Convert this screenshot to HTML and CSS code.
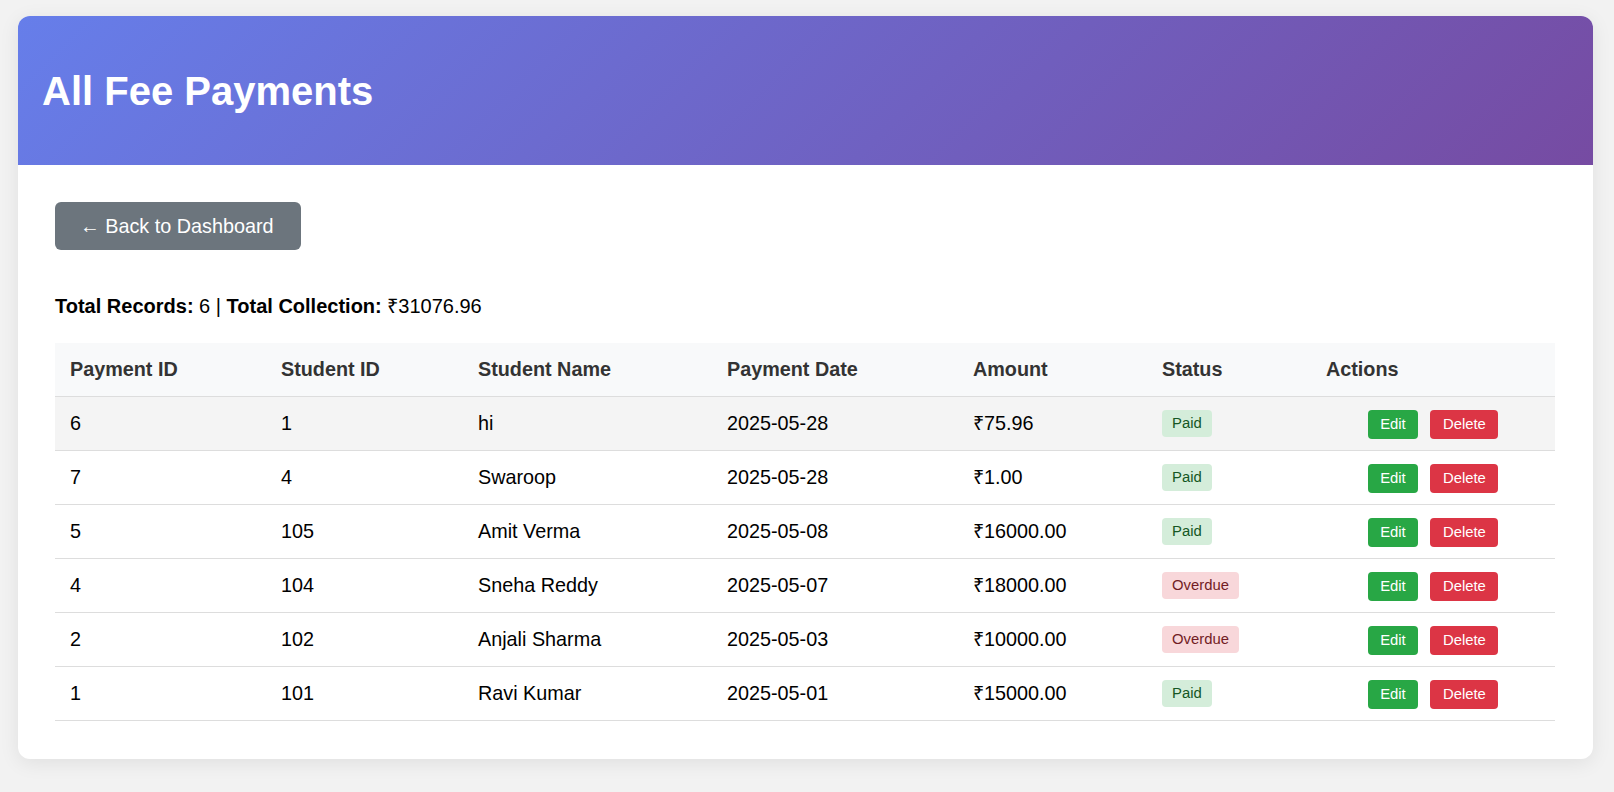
FILE: index.html
```html
<!DOCTYPE html>
<html lang="en">
<head>
<meta charset="utf-8">
<title>All Fee Payments</title>
<link rel="stylesheet" href="styles.css">
</head>
<body>
<div class="card">
  <header class="card-header">
    <h1>All Fee Payments</h1>
  </header>
  <main class="card-body">
    <div class="toolbar">
      <a class="btn-back" href="#">← Back to Dashboard</a>
    </div>
    <p class="summary"><strong>Total Records:</strong> 6 | <strong>Total Collection:</strong> ₹31076.96</p>
    <table class="payments">
      <colgroup>
        <col class="c1"><col class="c2"><col class="c3"><col class="c4"><col class="c5"><col class="c6"><col class="c7">
      </colgroup>
      <thead>
        <tr>
          <th>Payment ID</th><th>Student ID</th><th>Student Name</th><th>Payment Date</th><th>Amount</th><th>Status</th><th>Actions</th>
        </tr>
      </thead>
      <tbody>
        <tr class="hover">
          <td>6</td><td>1</td><td>hi</td><td>2025-05-28</td><td>₹75.96</td>
          <td><span class="badge paid">Paid</span></td>
          <td class="actions"><div class="act"><a class="btn edit" href="#">Edit</a><a class="btn delete" href="#">Delete</a></div></td>
        </tr>
        <tr>
          <td>7</td><td>4</td><td>Swaroop</td><td>2025-05-28</td><td>₹1.00</td>
          <td><span class="badge paid">Paid</span></td>
          <td class="actions"><div class="act"><a class="btn edit" href="#">Edit</a><a class="btn delete" href="#">Delete</a></div></td>
        </tr>
        <tr>
          <td>5</td><td>105</td><td>Amit Verma</td><td>2025-05-08</td><td>₹16000.00</td>
          <td><span class="badge paid">Paid</span></td>
          <td class="actions"><div class="act"><a class="btn edit" href="#">Edit</a><a class="btn delete" href="#">Delete</a></div></td>
        </tr>
        <tr>
          <td>4</td><td>104</td><td>Sneha Reddy</td><td>2025-05-07</td><td>₹18000.00</td>
          <td><span class="badge overdue">Overdue</span></td>
          <td class="actions"><div class="act"><a class="btn edit" href="#">Edit</a><a class="btn delete" href="#">Delete</a></div></td>
        </tr>
        <tr>
          <td>2</td><td>102</td><td>Anjali Sharma</td><td>2025-05-03</td><td>₹10000.00</td>
          <td><span class="badge overdue">Overdue</span></td>
          <td class="actions"><div class="act"><a class="btn edit" href="#">Edit</a><a class="btn delete" href="#">Delete</a></div></td>
        </tr>
        <tr>
          <td>1</td><td>101</td><td>Ravi Kumar</td><td>2025-05-01</td><td>₹15000.00</td>
          <td><span class="badge paid">Paid</span></td>
          <td class="actions"><div class="act"><a class="btn edit" href="#">Edit</a><a class="btn delete" href="#">Delete</a></div></td>
        </tr>
      </tbody>
    </table>
  </main>
</div>
</body>
</html>
```

FILE: styles.css
```css
* { box-sizing: border-box; }

html, body {
  margin: 0;
  background: #f2f2f2;
}

body {
  padding: 16px 21px 33px 18px;
  font-family: "Liberation Sans", Arial, sans-serif;
  font-size: 19.8px;
  color: #000;
}

.card {
  background: #fff;
  border-radius: 12px;
  overflow: hidden;
  box-shadow: 0 4px 20px rgba(0, 0, 0, 0.08);
}

.card-header {
  background: linear-gradient(135deg, #667eea 0%, #764ba2 100%);
  padding: 26px 24px 24.5px 24px;
}

.card-header h1 {
  margin: 26.5px 0;
  color: #fff;
  font-size: 40px;
  font-weight: bold;
  line-height: 45.5px;
}

.card-body {
  padding: 37px 38px 38px 37px;
}

.toolbar {
  display: flex;
}

.btn-back {
  display: inline-block;
  background: #6c757d;
  color: #fff;
  text-decoration: none;
  font-size: 19.8px;
  line-height: 23px;
  padding: 12.5px 25px 12.5px 25px;
  width: 246px;
  border-radius: 6px;
}

.summary {
  margin: 45px 0 25px 0;
  line-height: 23px;
  font-size: 20px;
}

.payments {
  width: 1500px;
  border-collapse: collapse;
  table-layout: fixed;
}

.c1 { width: 211px; }
.c2 { width: 197px; }
.c3 { width: 249px; }
.c4 { width: 246px; }
.c5 { width: 189px; }
.c6 { width: 164px; }
.c7 { width: 244px; }

.payments th,
.payments td {
  height: 54px;
  padding: 0 15px;
  text-align: left;
  vertical-align: middle;
  line-height: 23px;
  white-space: nowrap;
}

.payments th {
  height: 53.5px;
}

.payments thead tr {
  background: #f8f9fa;
  border-bottom: 1px solid #dddddd;
}

.payments th {
  font-weight: bold;
  color: #333;
}

.payments tbody tr {
  border-bottom: 1px solid #dddddd;
}

.payments tbody tr.hover {
  background: #f4f4f4;
}

.payments td.actions {
  padding-top: 2px;
}

.badge {
  display: inline-block;
  font-size: 14.85px;
  line-height: 17px;
  padding: 5px 10px;
  border-radius: 4px;
  vertical-align: baseline;
}

.badge.paid {
  background: #d4edda;
  color: #155724;
}

.badge.overdue {
  background: #f8d7da;
  color: #721c24;
}

.act {
  display: flex;
  justify-content: center;
  gap: 12px;
}

.btn {
  display: inline-block;
  color: #fff;
  text-decoration: none;
  font-size: 14.85px;
  line-height: 17px;
  padding: 6px 12.6px;
  border-radius: 4px;
}

.btn.edit { background: #28a745; }
.btn.delete { background: #dc3545; }
```
